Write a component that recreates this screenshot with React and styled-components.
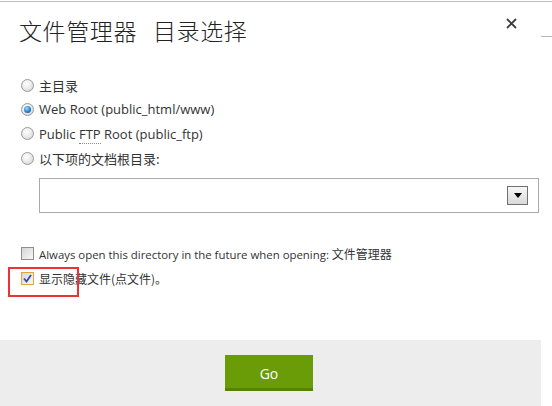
import React from 'react';
import styled, { createGlobalStyle } from 'styled-components';

const GlobalStyle = createGlobalStyle`
    html, body {
        margin: 0;
        padding: 0;
        background: #fff;
    }
    body {
        font-family: "Open Sans", "Noto Sans CJK SC", sans-serif;
        color: #333;
    }
`;

const Page = styled.div`
    position: relative;
    display: flex;
    width: 552px;
    height: 404px;
    margin-top: 1px;
    border-top: 1px solid #bcbcbc;
    overflow: hidden;
`;

const Dialog = styled.div`
    width: 541px;
    display: flex;
    flex-direction: column;
`;

const Gutter = styled.div`
    flex: 1;
    height: 1px;
    margin-top: 34px;
    background: #b5b5b5;
`;

const Header = styled.div`
    display: flex;
    justify-content: space-between;
    align-items: flex-start;
    height: 70px;
    padding: 0 23px 0 19px;
`;

const Title = styled.h1`
    display: flex;
    gap: 16px;
    margin: 12px 0 0;
    font-family: "Noto Sans CJK SC", sans-serif;
    font-size: 23px;
    font-weight: 300;
    line-height: 32px;
    color: #222;
    letter-spacing: 0.6px;
`;

const Close = styled.button`
    margin-top: 14px;
    padding: 0;
    border: 0;
    background: none;
    width: 14px;
    height: 14px;
    display: flex;
    align-items: center;
    justify-content: center;
`;

const Body = styled.div`
    flex: 1;
    padding: 1px 0 0 21px;
`;

const OptionRow = styled.label`
    display: flex;
    align-items: center;
    gap: 5px;
    height: 24.3px;
    font-size: 13px;
    color: #333;
`;

const Radio = styled.span`
    position: relative;
    width: 11px;
    height: 11px;
    border-radius: 50%;
    border: 1px solid #9a9a9a;
    background: radial-gradient(circle at 40% 35%, #ffffff 0%, #ececec 45%, #cfcfcf 100%);
    &::after {
        content: '';
        display: ${p => (p.$checked ? 'block' : 'none')};
        position: absolute;
        left: 2px;
        top: 2px;
        width: 7px;
        height: 7px;
        border-radius: 50%;
        background: radial-gradient(circle at 40% 35%, #9fe0ff 0%, #2f8ad8 50%, #10407e 100%);
    }
`;

const Abbr = styled.span`
    border-bottom: 1px dotted #888;
    line-height: 13px;
`;

const SelectBox = styled.div`
    display: flex;
    align-items: center;
    justify-content: flex-end;
    width: 488px;
    height: 33px;
    margin: 8px 0 0 18px;
    border: 1px solid #aaa;
    padding-right: 10px;
`;

const SelectArrow = styled.span`
    display: flex;
    align-items: center;
    justify-content: center;
    width: 19px;
    height: 17px;
    border: 1px solid #707070;
    background: linear-gradient(#f7f7f7, #d9d9d9);
`;

const CheckList = styled.div`
    margin-top: 28px;
`;

const CheckRow = styled.label`
    display: flex;
    align-items: center;
    gap: 5px;
    height: 25px;
    font-size: 12px;
    color: #333;
`;

const Latin = styled.span`
    font-size: 11.4px;
`;

const Box = styled.span`
    display: flex;
    align-items: center;
    justify-content: center;
    width: 11px;
    height: 11px;
    border: 1px solid ${p => (p.$focus ? '#e5a33e' : '#8e8e8e')};
    background: linear-gradient(135deg, #d6d6d6, #f7f7f7);
`;

const Cjk = styled.span`
    font-family: "Noto Sans CJK SC", sans-serif;
`;

const Highlight = styled.div`
    position: absolute;
    left: 8px;
    top: 265px;
    width: 67px;
    height: 26px;
    border: 2px solid #ee3131;
`;

const Footer = styled.div`
    display: flex;
    justify-content: center;
    height: 66px;
    padding: 15px 3px 0 0;
    box-sizing: border-box;
    background: #ededed;
`;

const GoButton = styled.button`
    width: 88px;
    height: 36px;
    border: 0;
    border-bottom: 3px solid #548300;
    background: #6a9c08;
    color: #fff;
    font-family: "Open Sans", sans-serif;
    font-size: 14px;
    padding: 3px 0 0;
`;

const App = () => {
    return (
        <>
            <GlobalStyle />
            <Page>
                <Dialog>
                    <Header>
                        <Title>
                            <span>文件管理器</span>
                            <span>目录选择</span>
                        </Title>
                        <Close aria-label="close">
                            <svg width="11" height="11" viewBox="0 0 11 11">
                                <path d="M1 1L10 10M10 1L1 10" stroke="#3d3d3d" strokeWidth="1.8" />
                            </svg>
                        </Close>
                    </Header>
                    <Body>
                        <OptionRow>
                            <Radio />
                            <Cjk>主目录</Cjk>
                        </OptionRow>
                        <OptionRow>
                            <Radio $checked />
                            Web Root (public_html/www)
                        </OptionRow>
                        <OptionRow>
                            <Radio />
                            <span>Public <Abbr>FTP</Abbr> Root (public_ftp)</span>
                        </OptionRow>
                        <OptionRow>
                            <Radio />
                            <Cjk>以下项的文档根目录:</Cjk>
                        </OptionRow>
                        <SelectBox>
                            <SelectArrow>
                                <svg width="8" height="5" viewBox="0 0 8 5">
                                    <path d="M0 0H8L4 5Z" fill="#000" />
                                </svg>
                            </SelectArrow>
                        </SelectBox>
                        <CheckList>
                            <CheckRow>
                                <Box />
                                <span>
                                    <Latin>Always open this directory in the future when opening: </Latin>
                                    <Cjk>文件管理器</Cjk>
                                </span>
                            </CheckRow>
                            <CheckRow>
                                <Box $focus>
                                    <svg width="9" height="9" viewBox="0 0 9 9">
                                        <path d="M1 4.5L3.5 7.5L8 1" stroke="#2f4fa0" strokeWidth="1.8" fill="none" />
                                    </svg>
                                </Box>
                                <Cjk>显示隐藏文件(点文件)。</Cjk>
                            </CheckRow>
                        </CheckList>
                    </Body>
                    <Footer>
                        <GoButton>Go</GoButton>
                    </Footer>
                </Dialog>
                <Gutter />
                <Highlight />
            </Page>
        </>
    );
};

export default App;
